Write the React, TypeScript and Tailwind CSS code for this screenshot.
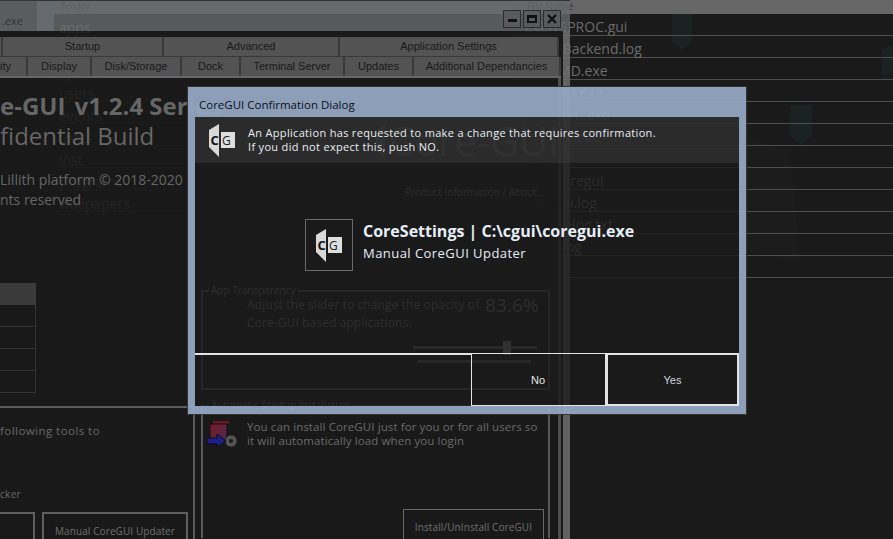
import React from 'react';

const uiFont = "font-['Open_Sans','Noto_Sans',sans-serif]";

const fileRows = [
  'CGSYSPROC.gui',
  'CGUI-Backend.log',
  'CGUIMD.exe',
  'CGUIPD.exe',
  'CGUISVC.exe',
  'coregui.exe',
  'config',
  'cgui.coregui',
  'coregui.log',
  'changelog.txt',
  'licensing',
  '',
];

const folderRows = ['apps', 'cfg', 'system', 'users', 'events', 'fonts', 'inst', 'programs', 'wallpapers'];

const topTabs = [
  { label: '', w: 'w-[3px]' },
  { label: 'Startup', w: 'w-[161px]' },
  { label: 'Advanced', w: 'w-[176px]' },
  { label: 'Application Settings', w: 'w-[219px]' },
];

const subTabs = [
  { label: 'ity', w: 'w-[28px]', align: 'text-left' },
  { label: 'Display', w: 'w-[64px]', align: 'text-center' },
  { label: 'Disk/Storage', w: 'w-[90px]', align: 'text-center' },
  { label: 'Dock', w: 'w-[59px]', align: 'text-center' },
  { label: 'Terminal Server', w: 'w-[104px]', align: 'text-center' },
  { label: 'Updates', w: 'w-[69px]', align: 'text-center' },
  { label: 'Additional Dependancies', w: 'w-[147px]', align: 'text-center' },
];

function CgLogo() {
  return (
    <svg width="27" height="33" viewBox="0 0 27 33" className="shrink-0">
      <polygon points="0,6 10,0 10,33 0,23" fill="#d8d8d8" />
      <rect x="12" y="8" width="14" height="16" fill="#dedede" />
      <text x="1.5" y="21" fontSize="13" fontWeight="700" fontFamily="Open Sans" fill="#111">C</text>
      <text x="13" y="21" fontSize="12" fontFamily="Open Sans" fill="#222">G</text>
    </svg>
  );
}

function InstallIcon() {
  return (
    <svg width="32" height="32" viewBox="0 0 32 32">
      <defs>
        <linearGradient id="red" x1="0" y1="0" x2="1" y2="1">
          <stop offset="0" stopColor="#7a1a22" />
          <stop offset="1" stopColor="#4a2a55" />
        </linearGradient>
      </defs>
      <rect x="6" y="2" width="16" height="3" fill="#6a1820" />
      <rect x="3" y="5" width="17" height="17" fill="url(#red)" stroke="#111" />
      <circle cx="24" cy="22" r="6" fill="#555" stroke="#222" />
      <circle cx="24" cy="22" r="2" fill="#1a1a1a" />
      <polygon points="0,19 10,19 10,15 19,22 10,28 10,25 0,25" fill="#1c1f8a" stroke="#0d0d0d" />
    </svg>
  );
}

function WallpaperMarks() {
  return (
    <svg width="893" height="539" viewBox="0 0 893 539" className="absolute inset-0">
      <polygon points="672,14 692,14 692,42 682,50 672,42" fill="#1a2222" />
      <polygon points="790,105 812,105 812,136 801,145 790,136" fill="#1a2222" />
      <polygon points="882,50 893,44 893,72 882,76" fill="#1a2222" />
      <polygon points="640,110 790,150 800,260 660,240" fill="#1c1c1c" />
    </svg>
  );
}

function WindowButton({ children }: { children: React.ReactNode }) {
  return (
    <div className="flex h-[18px] w-[18px] items-center justify-center border border-[#2c2c2c] bg-[#585a5c]">{children}</div>
  );
}

export default function App() {
  return (
    <div className={`relative h-[539px] w-[893px] overflow-hidden bg-[#1a1a1a] ${uiFont}`}>
      <WallpaperMarks />

      {/* file list window */}
      <div className="absolute left-[512px] right-0 top-0">
        <div className="h-[14px] bg-[#666666] pl-[15px] text-[10px] leading-[12px] text-[#333]">File Name</div>
        {fileRows.map((name, i) => (
          <div key={i} className="h-[22px] border-b border-[#4e4e4e] pl-[13px] text-[14px] leading-[26px] text-[#6b6b6b]">
            {name}
          </div>
        ))}
      </div>

      {/* folder list window and the one behind it */}
      <div className="absolute left-0 top-0 h-[31px] w-[37px] bg-[#2a2a2a]" />
      <div className="absolute left-[37px] top-0 h-[31px] w-[17px] bg-[#5f6878]" />
      <div className="absolute left-[54px] top-0 w-[458px]">
        <div className="h-[14px] bg-[#6b6b6b] pl-[7px] text-[10px] leading-[12px] text-[#333]">Folder</div>
        {folderRows.map((name) => (
          <div key={name} className="h-[22px] border-b border-[#3a3a3a] pl-[5px] text-[14px] leading-[28px] text-[#777]">
            {name}
          </div>
        ))}
      </div>

      {/* main settings window, sits over the lists and is see-through */}
      <div className="absolute left-0 top-0 h-[539px] w-[570px]">
        <div className="relative flex h-[31px] justify-end gap-[2px] border-t border-[#333] bg-[#666a6c]/80 pr-[9px] pt-[9px]">
          <div className="absolute left-[2px] top-[12px] text-[11px] text-[#333]">.exe</div>
          <WindowButton>
            <span className="mt-[2px] h-[3px] w-[9px] bg-[#111]" />
          </WindowButton>
          <WindowButton>
            <span className="h-[8px] w-[10px] border-2 border-t-[3px] border-[#111]" />
          </WindowButton>
          <WindowButton>
            <svg width="10" height="10" viewBox="0 0 10 10">
              <path d="M1 1 L9 9 M9 1 L1 9" stroke="#111" strokeWidth="2.4" />
            </svg>
          </WindowButton>
        </div>

        <div className="flex h-[508px]">
          <div className="h-[508px] w-[563px] bg-[#1a1a1a]/90 pt-[6px]">
            <div className="flex h-[20px] font-['Liberation_Sans',sans-serif] text-[11px] leading-[19px] text-[#191919]">
              {topTabs.map((tab) => (
                <div key={tab.w} className={`${tab.w} border-b border-r-2 border-[#3a3a3a] bg-[#5a5a5a]/90 text-center`}>
                  {tab.label}
                </div>
              ))}
            </div>
            <div className="flex h-[19px] font-['Liberation_Sans',sans-serif] text-[11px] leading-[18px] text-[#191919]">
              {subTabs.map((tab) => (
                <div key={tab.label} className={`${tab.w} ${tab.align} overflow-hidden border-r-2 border-[#3a3a3a] bg-[#5a5a5a]/90`}>
                  {tab.label}
                </div>
              ))}
            </div>
            <div className="h-[2px] w-[561px] bg-[#666]" />

            <div className="flex">
              {/* left column */}
              <div className="flex h-[461px] w-[195px] shrink-0 flex-col text-[#666]">
                <div className="mt-[11px] whitespace-nowrap text-[24px] font-bold leading-[33px]">
                  <span className="mr-[3px]">e-GUI</span> v1.2.4 Series
                </div>
                <div className="-mt-[3px] whitespace-nowrap text-[24px] leading-[33px]">fidential Build</div>
                <div className="mt-[18px] whitespace-nowrap text-[14px] leading-[20px]">Lillith platform © 2018-2020</div>
                <div className="whitespace-nowrap text-[14px] leading-[19px]">nts reserved</div>

                <div className="mt-[74px] h-[22px] w-[36px] bg-[#3a3a3a]" />
                {[0, 1, 2, 3].map((row) => (
                  <div key={row} className="h-[22px] w-[36px] border-b border-r border-[#333]" />
                ))}

                <div className="mt-[13px] h-[133px] w-[195px] border-r-2 border-t-2 border-[#5a5a5a] pt-[14px]">
                  <div className="whitespace-nowrap text-[11.5px] tracking-[0.45px] text-[#6a6a6a]">following tools to</div>
                  <div className="mt-[48px] text-[10px] tracking-[0.3px] text-[#6a6a6a]">cker</div>
                  <div className="mt-[10px] flex gap-[7px]">
                    <div className="h-[29px] w-[35px] border-2 border-b-0 border-l-0 border-[#5f5f5f]" />
                    <div className="h-[29px] w-[146px] border-2 border-b-0 border-[#5f5f5f] pt-[10px] text-center text-[10px] tracking-[0.1px] text-[#6f6f6f]">
                      Manual CoreGUI Updater
                    </div>
                  </div>
                </div>
              </div>

              {/* right column */}
              <div className="ml-[6px] h-[461px] w-[349px] shrink-0 text-[#666]">
                <div className="mt-[37px] flex items-center gap-[4px] pl-[174px]">
                  <svg width="10" height="34" viewBox="0 0 10 34" className="shrink-0">
                    <polygon points="0,8 10,0 10,34 0,26" fill="#555" />
                  </svg>
                  <div className="whitespace-nowrap text-[40px] leading-[52px] text-[#555]">Core-GUI</div>
                </div>
                <div className="mt-[18px] whitespace-nowrap pl-[204px] text-[10px] text-[#777]">Product Information / About...</div>

                <div className="relative mt-[90px] h-[100px] border-2 border-[#555] pl-[44px] pt-[4px]">
                  <div className="absolute -top-[9px] left-[6px] bg-[#1a1a1a] px-[2px] text-[10px] text-[#777]">App Transparency</div>
                  <div className="flex text-[12px] leading-[18px] tracking-[0.1px] text-[#777]">
                    <div className="w-[238px] whitespace-nowrap">
                      Adjust the slider to change the opacity of
                      <br />
                      Core-GUI based applications.
                    </div>
                    <div className="text-[19px] text-[#777]">83.6%</div>
                  </div>
                  <div className="relative ml-[166px] mt-[14px] h-[3px] w-[124px] bg-[#666]">
                    <div className="absolute -top-[5px] left-[90px] h-[14px] w-[8px] bg-[#888]" />
                  </div>
                  <div className="ml-[170px] mt-[11px] h-[3px] w-[114px] bg-[#555]" />
                </div>

                <div className="relative mt-[15px] h-[133px] border-2 border-b-0 border-[#5a5a5a] pl-[44px] pt-[13px]">
                  <div className="absolute -top-[9px] left-[6px] bg-[#1a1a1a] px-[2px] text-[10px] text-[#777]">Automatic Startup Installation</div>
                  <div className="absolute left-[4px] top-[12px]">
                    <InstallIcon />
                  </div>
                  <div className="whitespace-nowrap text-[11.5px] leading-[14px] tracking-[0.1px] text-[#6a6a6a]">
                    You can install CoreGUI just for you or for all users so
                    <br />
                    it will automatically load when you login
                  </div>
                  <div className="absolute right-[4px] top-[102px] h-[30px] w-[141px] border border-b-0 border-[#6a6a6a] pt-[10px] text-center text-[10px] tracking-[0.1px] text-[#707070]">
                    Install/UnInstall CoreGUI
                  </div>
                </div>
              </div>
              <div className="ml-[8px] h-[461px] w-[3px] shrink-0 bg-[#4e4e4e]" />
            </div>
          </div>
          <div className="h-[508px] w-[7px] bg-[#707070]/85" />
        </div>
      </div>

      {/* confirmation dialog */}
      <div className="absolute left-[188px] top-[87px] flex h-[327px] w-[558px] flex-col outline outline-1 outline-[#333]">
        <div className="h-[30px] shrink-0 bg-[#93a7c1]/95 pl-[11px] pt-[10px] text-[11.5px] leading-[16px] text-[#0b1018]">
          CoreGUI Confirmation Dialog
        </div>
        <div className="flex min-h-0 flex-1 flex-col border-x-[7px] border-b-[8px] border-[#93a7c1]/95">
          <div className="flex h-[46px] shrink-0 items-center bg-[#2d2d2d]/90 pl-[14px] text-[11px] leading-[14px] tracking-[0.32px] text-[#e8eef5]">
            <CgLogo />
            <div className="ml-[12px]">
              An Application has requested to make a change that requires confirmation.
              <br />
              If you did not expect this, push NO.
            </div>
          </div>
          <div className="flex min-h-0 flex-1 flex-col bg-[#1a1a1a]/80">
            <div className="flex flex-1 items-start pl-[110px] pt-[56px]">
              <div className="flex h-[52px] w-[48px] items-center justify-center border border-[#6b6b6b]">
                <CgLogo />
              </div>
              <div className="ml-[10px] text-[#e6eef8]">
                <div className="mt-[1px] text-[16px] font-bold leading-[22px]">CoreSettings | C:\cgui\coregui.exe</div>
                <div className="text-[13px] leading-[22px] tracking-[0.45px]">Manual CoreGUI Updater</div>
              </div>
            </div>
            <div className="flex h-[53px] shrink-0 font-['Liberation_Sans',sans-serif] text-[11px]">
              <div className="flex-1 border-t-2 border-[#e4e4e4]" />
              <div className="flex w-[135px] items-center justify-end border border-[#e4e4e4] pr-[60px] pt-px text-[#e6e6e6]">No</div>
              <div className="flex w-[133px] items-center justify-center border-2 border-[#e4e4e4] bg-[#1a1a1a] pt-px text-[#cfd6df]">Yes</div>
            </div>
          </div>
        </div>
      </div>
    </div>
  );
}
